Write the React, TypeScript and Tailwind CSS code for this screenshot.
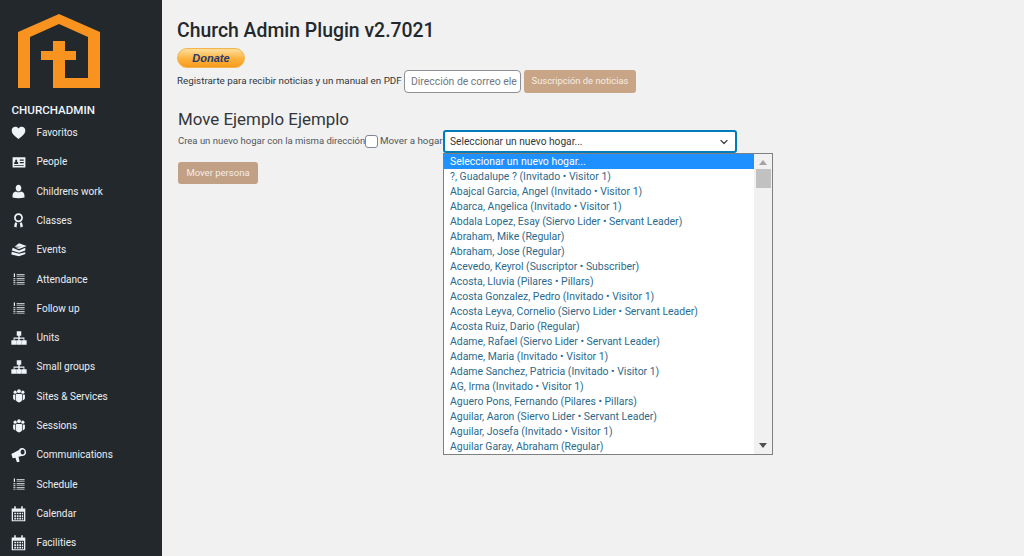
import React from 'react';
import { ChevronDown } from 'lucide-react';

function Glyph({ children, w = 16 }: { children: React.ReactNode; w?: number }) {
  return (
    <svg width={w} height={w} viewBox="0 0 20 20" fill="currentColor" className="block">
      {children}
    </svg>
  );
}

const HeartIcon = () => (
  <Glyph w={17}>
    <path d="M10 17.5 C6 14.5 2 11.5 2 7.5 C2 4.8 4 3.2 6.2 3.2 C7.8 3.2 9.2 4 10 5.4 C10.8 4 12.2 3.2 13.8 3.2 C16 3.2 18 4.8 18 7.5 C18 11.5 14 14.5 10 17.5 Z" />
  </Glyph>
);

const CardIcon = () => (
  <Glyph w={16}>
    <path fillRule="evenodd" d="M2 4 H18 V17 H2 Z M4 7 V12.5 H9 V11 C9 10 7.8 9.6 7.4 9.4 C8 9 8 7 6.5 7 C5 7 5 9 5.6 9.4 C5.2 9.6 4 10 4 11 Z M11 7 V8.5 H16 V7 Z M11 10 V11.5 H16 V10 Z M4 14 V15 H16 V14 Z" />
  </Glyph>
);

const UserIcon = () => (
  <Glyph w={17}>
    <path d="M10 2 C12 2 13.3 3.6 13.3 5.8 C13.3 8 12 10 10 10 C8 10 6.7 8 6.7 5.8 C6.7 3.6 8 2 10 2 Z M7 10 C8 11.3 12 11.3 13 10 C15.5 10.8 17 12 17 14.5 V17 C13 18.3 7 18.3 3 17 V14.5 C3 12 4.5 10.8 7 10 Z" />
  </Glyph>
);

const AwardIcon = () => (
  <Glyph w={17}>
    <path fillRule="evenodd" d="M10 1.5 C13 1.5 15.2 3.8 15.2 6.7 C15.2 9.6 13 12 10 12 C7 12 4.8 9.6 4.8 6.7 C4.8 3.8 7 1.5 10 1.5 Z M10 3.5 C8.2 3.5 6.8 5 6.8 6.7 C6.8 8.5 8.2 10 10 10 C11.8 10 13.2 8.5 13.2 6.7 C13.2 5 11.8 3.5 10 3.5 Z M6 12 L8.5 13 L7.5 18.5 L5.5 17 L4.5 18 Z M14 12 L11.5 13 L12.5 18.5 L14.5 17 L15.5 18 Z" />
  </Glyph>
);

const LearnIcon = () => (
  <Glyph w={18}>
    <path d="M10 2.5 L18.5 5.5 L10 9 L6 7.5 L13 6.5 L5 6.5 Z M3 7.5 L10 10.5 L17 7.5 V10.5 L10 13 L2 10.5 Z M2 12 L10 14.3 L17 12.5 V14.5 L10 17 L1.5 15 Z" />
  </Glyph>
);

const ListIcon = () => (
  <Glyph w={16}>
    <path d="M7 4 H17 V5.3 H7 Z M7 9 H17 V10.3 H7 Z M7 14 H17 V15.3 H7 Z M7 6.5 H17 V7.2 H7 Z M7 11.5 H17 V12.2 H7 Z M7 16.3 H17 V17 H7 Z M3.5 3 H5 V7.5 H3.5 Z M3 9 H5.5 V10.3 H3 Z M3 11.5 H5.5 V12.8 H3 Z M3 14 H5.5 V15 H3 Z M3 16 H5.5 V17 H3 Z" />
  </Glyph>
);

const NetworkIcon = () => (
  <Glyph w={18}>
    <path d="M7.5 2.5 H12.5 V7.5 H10.8 V9.5 H16 V12.5 H18.5 V17.5 H13 V12.5 H15 V10.7 H10.8 V12.5 H12.8 V17.5 H7.2 V12.5 H9.2 V10.7 H5 V12.5 H7 V17.5 H1.5 V12.5 H4 V9.5 H9.2 V7.5 H7.5 Z" />
  </Glyph>
);

// three figures huddled together
const GroupsIcon = () => (
  <Glyph w={16}>
    <circle cx="10" cy="4" r="2.4" />
    <circle cx="5.2" cy="5.2" r="2" />
    <circle cx="14.8" cy="5.2" r="2" />
    <path d="M7.4 7.4 H12.6 C13.4 7.4 13.8 8 13.8 8.8 V14.5 C13.8 16.8 12 18 10 18 C8 18 6.2 16.8 6.2 14.5 V8.8 C6.2 8 6.6 7.4 7.4 7.4 Z" />
    <path d="M3.6 8 H5.4 V15.6 C3.8 15.2 2.6 14.2 2.6 12.6 V9 C2.6 8.4 3 8 3.6 8 Z" />
    <path d="M14.6 8 H16.4 C17 8 17.4 8.4 17.4 9 V12.6 C17.4 14.2 16.2 15.2 14.6 15.6 Z" />
  </Glyph>
);

const MegaphoneIcon = () => (
  <Glyph w={18}>
    <path fillRule="evenodd" d="M1.5 9 L10 4.5 C10.5 2.5 13 1.5 15 2.5 C17.5 3.8 18.5 6.5 17.5 9 C16.5 10.8 14.5 11.5 13 11 L9.5 12 L10.5 17 C10.5 18 8 18.5 7.5 17.5 L6 13 L3 13.5 Z M14 4 C12.6 4 11.8 5.3 11.8 6.8 C11.8 8.3 12.6 9.5 14 9.5 C15.4 9.5 16.2 8.3 16.2 6.8 C16.2 5.3 15.4 4 14 4 Z" />
  </Glyph>
);

const CalendarIcon = () => (
  <Glyph w={17}>
    <path
      fillRule="evenodd"
      d="M5 1.5 H6.8 V4 H13.2 V1.5 H15 V4 H18 V19 H2 V4 H5 Z M3.5 8 V17.8 H16.5 V8 Z M5 9 H7 V11 H5 Z M8 9 H10 V11 H8 Z M11 9 H13 V11 H11 Z M14 9 H15.5 V11 H14 Z M5 12 H7 V14 H5 Z M8 12 H10 V14 H8 Z M11 12 H13 V14 H11 Z M14 12 H15.5 V14 H14 Z M5 15 H7 V17 H5 Z M8 15 H10 V17 H8 Z M11 15 H13 V17 H11 Z M14 15 H15.5 V17 H14 Z"
    />
  </Glyph>
);

const menu = [
  { label: 'Favoritos', icon: HeartIcon },
  { label: 'People', icon: CardIcon },
  { label: 'Childrens work', icon: UserIcon },
  { label: 'Classes', icon: AwardIcon },
  { label: 'Events', icon: LearnIcon },
  { label: 'Attendance', icon: ListIcon },
  { label: 'Follow up', icon: ListIcon },
  { label: 'Units', icon: NetworkIcon },
  { label: 'Small groups', icon: NetworkIcon },
  { label: 'Sites & Services', icon: GroupsIcon },
  { label: 'Sessions', icon: GroupsIcon },
  { label: 'Communications', icon: MegaphoneIcon },
  { label: 'Schedule', icon: ListIcon },
  { label: 'Calendar', icon: CalendarIcon },
  { label: 'Facilities', icon: CalendarIcon },
];

const options = [
  '?, Guadalupe ? (Invitado • Visitor 1)',
  'Abajcal Garcia, Angel (Invitado • Visitor 1)',
  'Abarca, Angelica (Invitado • Visitor 1)',
  'Abdala Lopez, Esay (Siervo Lider • Servant Leader)',
  'Abraham, Mike (Regular)',
  'Abraham, Jose (Regular)',
  'Acevedo, Keyrol (Suscriptor • Subscriber)',
  'Acosta, Lluvia (Pilares • Pillars)',
  'Acosta Gonzalez, Pedro (Invitado • Visitor 1)',
  'Acosta Leyva, Cornelio (Siervo Lider • Servant Leader)',
  'Acosta Ruiz, Dario (Regular)',
  'Adame, Rafael (Siervo Lider • Servant Leader)',
  'Adame, Maria (Invitado • Visitor 1)',
  'Adame Sanchez, Patricia (Invitado • Visitor 1)',
  'AG, Irma (Invitado • Visitor 1)',
  'Aguero Pons, Fernando (Pilares • Pillars)',
  'Aguilar, Aaron (Siervo Lider • Servant Leader)',
  'Aguilar, Josefa (Invitado • Visitor 1)',
  'Aguilar Garay, Abraham (Regular)',
];

function Logo() {
  return (
    <svg width="84" height="76" viewBox="17 13 84 76" className="block">
      <path
        fill="#f7931e"
        d="M18 32 L59 14 L100 32 L100 88 L53 88 L53 60 L41 60 L41 51 L53 51 L53 41 L65 41 L65 51 L76 51 L76 60 L65 60 L65 78 L88 78 L88 37 L59 24 L30 37 L30 88 L18 88 Z"
      />
    </svg>
  );
}

export default function App() {
  return (
    <div className="flex h-screen overflow-hidden bg-[#f1f1f1] font-['Roboto',sans-serif] text-[#32373c]">
      <aside className="w-[162px] shrink-0 bg-[#23282d] pt-[13px]">
        <div className="pl-[17px]">
          <Logo />
        </div>
        <div className="mt-[13px] pl-[11.5px] text-[11.6px] leading-[16px] font-medium text-[#f0f5fa]">CHURCHADMIN</div>
        <nav>
          {menu.map((item) => {
            const Icon = item.icon;
            return (
              <div key={item.label} className="flex h-[29.3px] items-center">
                <span className="flex w-[36.5px] justify-center pl-[1px] text-[#eef3f8]">
                  <Icon />
                </span>
                <span className="text-[10.05px] text-[#e9eef3]">{item.label}</span>
              </div>
            );
          })}
        </nav>
      </aside>

      <main className="flex-1 pl-[15px]">
        <h1 className="mt-[18px] text-[19.4px] leading-[26px] font-medium text-[#23282d]">Church Admin Plugin v2.7021</h1>

        <div className="mt-[4px] flex h-[20px] w-[68px] items-center justify-center rounded-full border border-[#f5b44c] bg-gradient-to-b from-[#ffdf9a] via-[#fdb540] to-[#f79a1a] font-['Liberation_Sans',sans-serif] text-[11px] leading-none font-bold text-[#1f3a6e] italic">
          Donate
        </div>

        <div className="mt-[2px] flex h-[23px] items-center">
          <span className="w-[224px] text-[9.8px] whitespace-nowrap text-[#32373c]">Registrarte para recibir noticias y un manual en PDF</span>
          <div className="ml-[3px] flex h-[23px] w-[117px] items-center overflow-hidden rounded-[4px] border border-[#8c8f94] bg-white pl-[6px] text-[10.4px] whitespace-nowrap text-[#72777c]">
            Dirección de correo ele
          </div>
          <div className="ml-[3px] flex h-[23px] w-[112px] items-center justify-center rounded-[3px] bg-[#c8a586] text-[9.4px] text-[#f6ede4]">
            Suscripción de noticias
          </div>
        </div>

        <h2 className="mt-[15px] ml-[1px] text-[16.9px] leading-[22px] text-[#32373c]">Move Ejemplo Ejemplo</h2>

        <div className="ml-[1px] flex h-[23px] items-center">
          <span className="w-[187px] text-[9.5px] whitespace-nowrap text-[#50575e]">Crea un nuevo hogar con la misma dirección</span>
          <span className="size-[13px] rounded-[3px] border border-[#7e8993] bg-white"></span>
          <span className="ml-[2px] w-[62px] text-[9.8px] whitespace-nowrap text-[#50575e]">Mover a hogar</span>
          <div className="relative ml-[1px]">
            <div className="flex h-[23px] w-[294px] items-center justify-between rounded-[3px] border-2 border-[#007cba] bg-white px-[5px] text-[10.2px] text-[#32373c]">
              <span>Seleccionar un nuevo hogar...</span>
              <ChevronDown size={12} strokeWidth={2.5} className="text-[#444]" />
            </div>
            <div className="absolute top-[23px] left-0 flex h-[302px] w-[330px] border border-[#7f7f7f] bg-white text-[10.45px] leading-[15px] text-[#2c6a8c]">
              <div className="flex-1 overflow-hidden">
                <div className="h-[15px] bg-[#1e90ff] pl-[6px] text-white">Seleccionar un nuevo hogar...</div>
                {options.map((o) => (
                  <div key={o} className="h-[15px] pl-[6px] whitespace-nowrap">{o}</div>
                ))}
              </div>
              <div className="flex w-[18px] flex-col items-center bg-[#f1f1f1]">
                <div className="mt-[6px] size-0 border-x-[4px] border-b-[5px] border-x-transparent border-b-[#a3a3a3]"></div>
                <div className="mt-[4px] h-[19px] w-[15px] bg-[#c1c1c1]"></div>
                <div className="mt-auto mb-[6px] size-0 border-x-[4px] border-t-[5px] border-x-transparent border-t-[#505050]"></div>
              </div>
            </div>
          </div>
        </div>

        <div className="mt-[9px] ml-[1px] flex h-[22px] w-[80px] items-center justify-center rounded-[3px] bg-[#c1a086] text-[9.5px] text-[#f6ede4]">
          Mover persona
        </div>
      </main>
    </div>
  );
}
